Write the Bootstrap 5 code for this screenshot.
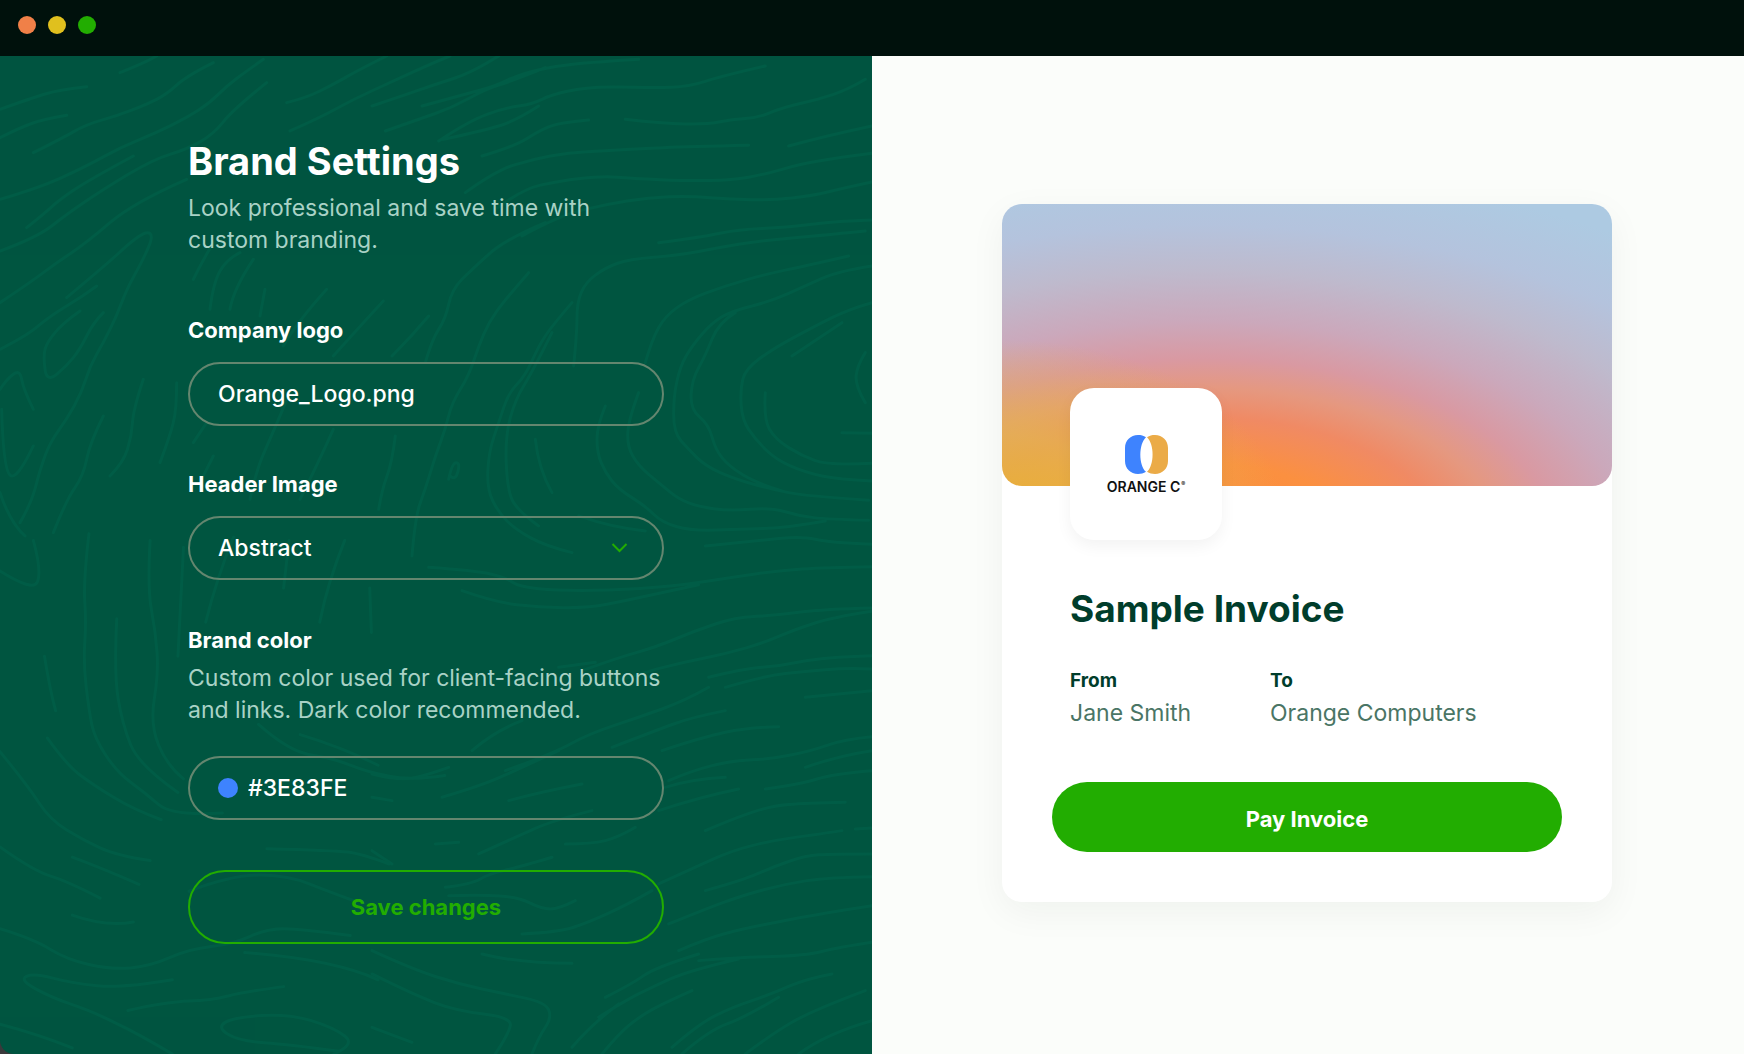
<!DOCTYPE html>
<html lang="en">
<head>
<meta charset="utf-8">
<meta name="viewport" content="width=device-width, initial-scale=1">
<title>Brand Settings</title>
<link href="https://cdn.jsdelivr.net/npm/bootstrap@5.3.0/dist/css/bootstrap.min.css" rel="stylesheet">
<style>
  body { font-family: Inter, "Liberation Sans", sans-serif; background: #3a3a3c; }
  .title-bar { height: 56px; background: #00110c; padding: 0 18px 6px; gap: 12px; }
  .win-dot { width: 18px; height: 18px; }
  .dot-close { background: #f08048; }
  .dot-min { background: #e0c01e; }
  .dot-max { background: #22ad01; }

  .settings-pane { background: #005540; color: #fff; padding: 81px 208px 48px 188px; border-bottom-left-radius: 14px; overflow: hidden; }
  .topo { position: absolute; inset: 0; width: 100%; height: 100%; fill: none; stroke: #006049; stroke-width: 3; stroke-linejoin: round; stroke-linecap: round; opacity: .7; }
  .topo path { vector-effect: non-scaling-stroke; }
  .pane-title { font-size: 38px; line-height: 48px; font-weight: 700; margin-bottom: 7px; }
  .intro { font-size: 23px; line-height: 32px; color: #a9d2c6; }
  .intro-top { margin-bottom: 58px; max-width: 430px; }
  .field-name { font-size: 22px; line-height: 32px; font-weight: 700; margin-bottom: 16px; }
  .field-next { margin-top: 42px; }
  .field-color { margin: 44px 0 6px; }
  .pill, .pill:focus { height: 64px; border: 2px solid #64866f; border-radius: 32px; background: transparent; color: #fff; font-size: 23px; font-weight: 500; padding: 0 28px; box-shadow: none; }
  .pill option { color: #003d2b; }
  .pill-color { margin: 30px 0 50px; gap: 8px; }
  .swatch { width: 20px; height: 20px; background: #3e83fe; }
  .bare, .bare:focus { background: transparent; border: 0; padding: 0 2px; color: #fff; font: inherit; outline: 0; }
  .chevron { position: absolute; right: 36px; top: 26px; pointer-events: none; }
  .btn-save { height: 74px; border: 2px solid #22ad01; color: #22ad01; border-radius: 37px; font-size: 22px; font-weight: 700; }

  .preview-pane { background: #fbfdfa; padding: 148px 130px; }
  .invoice { width: 610px; max-width: 100%; background: #fff; border-radius: 20px; box-shadow: 0 10px 36px rgba(0, 40, 20, .05); }
  .cover { height: 282px; border-radius: 20px;
    background:
      radial-gradient(46% 62% at 0% 110%, rgba(232, 178, 50, .95) 0%, rgba(228, 180, 75, .75) 45%, rgba(215, 185, 130, 0) 100%),
      radial-gradient(66% 74% at 33% 120%, #ff8a3a 0%, #fb9040 38%, #f08a64 60%, #e59880 74%, #d999a2 88%, #cba8bb 106%, #bebacd 130%, #b4c3dd 152%, #adcae2 180%); }
  .logo-tile { position: absolute; left: 68px; top: 184px; width: 152px; height: 152px; border-radius: 24px; background: #fff; box-shadow: 0 6px 16px rgba(0, 0, 0, .05); padding-top: 1px; }
  .logo-name { font-size: 14px; line-height: 16px; font-weight: 600; color: #111; margin-top: 5px; }
  .logo-name sup { font-size: 6px; top: -6px; margin-left: 1px; }
  .invoice-body { padding: 99px 50px 50px; }
  .inset-x { padding: 0 18px; }
  .invoice-title { font-size: 37px; line-height: 48px; font-weight: 700; color: #003d2b; margin-bottom: 34px; }
  .party-name { font-size: 19px; line-height: 28px; font-weight: 700; color: #003d2b; }
  .party { font-size: 23px; line-height: 32px; color: #4a7565; margin: 2px 0 53px; }
  .party-from { width: 200px; }
  .btn-pay, .btn-pay:hover { height: 70px; border: 0; border-radius: 35px; background: #22ad01; color: #fff; font-size: 22px; font-weight: 700; padding-top: 10px; }
</style>
</head>
<body class="min-vh-100 d-flex flex-column">
<header class="title-bar d-flex align-items-center">
  <span class="win-dot dot-close rounded-circle"></span>
  <span class="win-dot dot-min rounded-circle"></span>
  <span class="win-dot dot-max rounded-circle"></span>
</header>
<main class="row g-0 flex-grow-1">
  <section class="col-6 settings-pane position-relative">
    <!-- contour-line texture -->
    <svg class="topo" viewBox="0 0 872 998" preserveAspectRatio="xMidYMid slice" aria-hidden="true">
      <g transform="scale(.3333)">
        <path d="M0 160L90 128L180 100L260 92M0 245L60 215L130 190L200 178M360 50L440 18L470 0M100 290L180 250L260 205L350 180L440 145L500 115L560 60L640 20M0 430L120 395L260 330L360 275L470 230L560 185L630 140L680 90L740 45L790 10M80 515L130 475L180 430L270 370L400 300M0 585L110 545L200 475L310 400L460 310L560 280L640 235L700 160L800 80M0 740L90 680L170 620L260 560L400 440L560 370M200 725L320 625L390 560L440 525L460 540L430 610L380 700L350 780L310 860L270 930L245 1010L200 1090L150 1160L120 1240L95 1340L60 1400M0 880L80 840L150 780L250 720L290 690M240 765L190 800L140 860L130 900L140 980L200 930L240 880L280 800L310 770M0 1000L20 970L60 940L70 1000L100 1060M5 1060L10 1240L50 1275L100 1170M0 1310L30 1400L75 1440M160 1430L200 1330L250 1260L270 1160L310 1080M430 970L400 1060L395 1140L370 1220L330 1260M530 980L530 1060L510 1140L480 1220M580 670L610 610L640 560M630 760L640 680L680 610L720 590M690 760L700 700L760 610M780 780L795 700M580 1160L620 1100M640 1200L600 1280M870 1010L810 1150L770 1240L750 1330M1000 1120L960 1210L900 1330M860 140L920 125L1000 85L1080 40L1160 0M870 225L960 185L1060 130L1170 80L1300 20L1350 0M850 870L890 800L980 700M1000 900L1090 800L1150 735"/>
      </g>
      <g transform="translate(372 0) scale(.3333)">
        <path d="M0 150L90 120L190 85L300 50L380 0M150 150L260 120L370 90L430 60L520 35L640 20L800 10M40 225L140 190L240 155L340 100L420 75L520 35M200 255L290 195L400 155L480 145L540 115L640 95L720 92L850 95L950 92L1050 60L1180 30M215 250L330 225L430 195L500 150M330 300L430 270L500 225L560 200L650 192M760 190L870 203L1010 205L1080 190L1160 185L1230 155L1340 130L1430 100L1480 70M1250 270L1360 240L1500 210M280 410L370 345L480 310L590 290L700 285L800 278L950 272L1130 268M370 460L450 400L560 375L690 360L780 367L950 375L1080 372L1180 355L1280 325L1400 305L1500 292M450 540L560 480L700 445L830 425L950 420L1080 430L1200 432L1320 420L1420 395L1500 378M860 560L980 545L1100 520L1240 515L1400 495L1500 492M605 930L615 830L615 740L640 680L700 635L770 610L920 598L1040 575L1160 555L1330 540L1480 525M60 900L120 840L170 780M160 920L180 850L220 790L240 700L300 640L400 550L520 500M470 650L400 730L350 800L320 870L290 960L240 1040L220 1120L190 1200L160 1300L130 1380L120 1500M600 740L540 810L500 870L460 960L410 1010L380 1100L350 1190L345 1300L380 1370L430 1420L520 1470L600 1490M540 830L480 950L430 1030L400 1140L405 1290L430 1360L500 1410M820 920L840 850L880 780L950 730L1060 690L1180 655L1300 630L1430 600M800 1010L770 1090L765 1170L800 1230L860 1280L920 1330L980 1352L1070 1365L1200 1355L1280 1380L1370 1390L1490 1393M700 1050L675 1110L675 1190L700 1250L740 1300L820 1350L870 1400L960 1425L1100 1420L1250 1415L1360 1395M1500 630L1400 645L1300 690L1200 735L1080 765L1020 800L960 870L925 930L905 1020L905 1130L950 1180L1000 1230L1090 1270L1200 1300L1300 1320L1490 1333M1090 770L1040 800L1000 900L960 970L955 1060L1010 1105L1030 1180L1070 1230L1150 1280L1230 1305M1500 740L1430 760L1330 810L1200 880L1120 940L1105 1000L1110 1090L1150 1150L1210 1210L1300 1250L1400 1270L1500 1275M1180 1010L1175 1090L1210 1150L1290 1200L1370 1228L1500 1222M1260 900L1350 840L1410 800M1480 890L1455 930L1450 990L1480 1040M1410 1130L1500 1132M230 1270L240 1220L265 1220L250 1275L235 1260M70 1140L60 1220L30 1300L20 1360M490 1150L500 1240L540 1310M620 1380L720 1415L820 1425M1000 1470L1150 1455L1290 1440L1370 1460L1500 1465"/>
      </g>
      <g transform="translate(372 498) scale(.3333)">
        <path d="M170 40L310 50L400 70L440 98L560 110L760 108L940 92L1080 70L1220 50L1360 40L1500 38M270 110L370 145L500 160L650 162L760 140L860 118L980 92M630 350L740 310L850 280L970 230L1090 190L1200 185L1360 165L1500 162M680 400L800 360L930 325L1060 300L1180 265L1260 230L1380 190L1500 172M1010 370L1110 345L1230 335L1350 310L1500 305M1060 400L1180 365L1300 352L1420 342L1500 345M1300 430L1400 420L1500 410M300 590L370 530L450 500M400 650L540 600L650 540L800 490L940 440L1010 400M720 580L850 530L960 490L1060 470M870 590L990 550L1130 520L1220 518M210 730L330 695L450 640L560 590M890 680L960 650L1080 620L1200 615L1320 590L1420 555L1500 548M1300 640L1400 605L1500 590M880 700L960 675L1060 670M410 740L500 715L630 690M1180 705L1290 690L1380 660L1500 650M0 730L60 740M0 660L80 680L160 665L230 640M860 770L980 730L1100 705M1000 830L1080 795L1200 755L1300 748L1420 745M320 900L420 855L540 800L660 770M580 870L660 870L740 850L790 820M190 870L260 865M0 890L60 930M860 990L970 940L1080 890L1200 860L1310 845L1410 830M1450 825L1500 822M220 1000L300 990L350 960L440 940L540 910M1000 1010L1110 980L1200 940L1300 905L1380 900L1500 900M230 1025L330 1022L440 1030L510 1065L560 1065L610 1040M890 1110L1000 1065L1110 1025L1240 990L1370 970L1500 968M450 1140L560 1135L650 1105L770 1050L840 1010M920 1190L1000 1155L1110 1125L1240 1100L1340 1080L1500 1055M330 1200L440 1228L600 1228M980 1220L1100 1210L1300 1205L1400 1180L1500 1165M0 1190L120 1245L260 1290L400 1320L520 1345L540 1390L500 1450L480 1500M700 1330L780 1290L850 1240L980 1200M680 1390L760 1340L840 1300L950 1250L1100 1215M0 1260L120 1320L250 1370L420 1390L410 1440L370 1500M600 1480L660 1410L740 1350M690 1500L740 1440L800 1390L870 1350L960 1310M900 1480L980 1410L1080 1360L1200 1320L1300 1275L1380 1260M930 1500L1010 1430L1120 1390L1220 1330M1120 1500L1200 1440L1320 1370L1480 1310M1280 1500L1360 1440L1500 1400M0 1420L120 1465M560 340L670 325"/>
      </g>
      <g transform="translate(0 464) scale(.556 .3406)">
        <path d="M0 150L60 212L75 150L60 60M160 40L150 180L155 300L150 420L160 560L170 640L210 740L260 800L310 870L400 860M210 290L205 450L220 600L250 720L320 800M270 60L265 200L280 330L285 450L270 600L300 720L330 760M330 80L325 250L320 400M420 50L390 170L370 300M520 60L510 200M665 200L668 330M620 60L590 180L575 300M80 400L90 500L100 560M0 680L50 780L90 880L150 940L210 985L270 1000M85 640L120 720L170 780L240 850L290 880M465 600L520 680L600 700L660 740L740 765L800 750M540 630L620 670L680 720M0 960L60 1030L120 1060L180 1110M130 990L180 1020L250 1070M340 1090L420 1040L520 1045L590 1090L640 1120M480 965L600 970L650 980L700 1010M130 1160L190 1195L240 1180M0 1200L60 1230L120 1290L200 1320L270 1310L340 1260L420 1245L480 1200L540 1200L630 1220M440 1270L600 1290L680 1350M310 1350L220 1375L130 1360L60 1330L35 1350L90 1400L160 1440L200 1470L260 1520L310 1568M230 1440L300 1415L380 1410L440 1385L510 1370M600 1568L640 1540L600 1490L520 1450L420 1460L390 1490L430 1530L520 1540L610 1560M0 1480L70 1510L130 1550"/>
      </g>
    </svg>
    <form class="position-relative">
      <h1 class="pane-title">Brand Settings</h1>
      <p class="intro intro-top">Look professional and save time with custom branding.</p>

      <label class="field-name d-block" for="logo">Company logo</label>
      <input class="form-control pill" id="logo" type="text" value="Orange_Logo.png">

      <label class="field-name field-next d-block" for="header">Header Image</label>
      <div class="position-relative">
        <select class="form-control pill" id="header"><option>Abstract</option><option>Solid</option></select>
        <svg class="chevron" width="17" height="12" viewBox="0 0 17 12" fill="none" stroke="#22ad01" stroke-width="2" aria-hidden="true"><path d="M1.500 2L8.500 9L15.500 2"/></svg>
      </div>

      <label class="field-name field-color d-block" for="color">Brand color</label>
      <p class="intro mb-0">Custom color used for client-facing buttons and links. Dark color recommended.</p>
      <div class="pill pill-color d-flex align-items-center">
        <span class="swatch rounded-circle flex-shrink-0"></span>
        <input class="bare w-100" id="color" type="text" value="#3E83FE">
      </div>
      <button class="btn btn-save w-100" type="button">Save changes</button>
    </form>
  </section>

  <section class="col-6 preview-pane">
    <article class="invoice position-relative">
      <div class="cover"></div>
      <div class="logo-tile d-flex flex-column align-items-center justify-content-center">
        <svg width="43" height="39" viewBox="0 0 43 39" aria-hidden="true">
          <path fill="#3e83fe" d="M13 0C16 0 18.500 .6 21 2.200C13.500 9 13.500 30 21 36.800C18.500 38.400 16 39 13 39C5.500 39 0 33.500 0 26V13C0 5.500 5.500 0 13 0Z"/>
          <path fill="#ebab47" d="M30 0C27 0 24.500 .6 22 2.200C29.500 9 29.500 30 22 36.800C24.500 38.400 27 39 30 39C37.500 39 43 33.500 43 26V13C43 5.500 37.500 0 30 0Z"/>
        </svg>
        <div class="logo-name">ORANGE C<sup>®</sup></div>
      </div>
      <div class="invoice-body">
        <h2 class="invoice-title inset-x">Sample Invoice</h2>
        <div class="d-flex inset-x">
          <div class="party-from">
            <div class="party-name">From</div>
            <p class="party">Jane Smith</p>
          </div>
          <div>
            <div class="party-name">To</div>
            <p class="party">Orange Computers</p>
          </div>
        </div>
        <button class="btn btn-pay w-100" type="button">Pay Invoice</button>
      </div>
    </article>
  </section>
</main>
<script src="https://cdn.jsdelivr.net/npm/bootstrap@5.3.0/dist/js/bootstrap.bundle.min.js"></script>
<script>
  // Round the corners of every contour line: each vertex becomes the control point of a quadratic curve.
  document.querySelectorAll('.topo path').forEach(function (path) {
    path.setAttribute('d', path.getAttribute('d').split('M').filter(Boolean).map(function (line) {
      var p = line.split('L').map(function (s) { return s.trim().split(' ').map(Number); });
      var out = 'M' + p[0].join(' ');
      for (var i = 1; i < p.length - 1; i++) {
        var end = i === p.length - 2 ? p[i + 1] : [(p[i][0] + p[i + 1][0]) / 2, (p[i][1] + p[i + 1][1]) / 2];
        out += 'Q' + p[i].join(' ') + ' ' + end.join(' ');
      }
      return p.length === 2 ? out + 'L' + p[1].join(' ') : out;
    }).join(''));
  });
</script>
</body>
</html>
